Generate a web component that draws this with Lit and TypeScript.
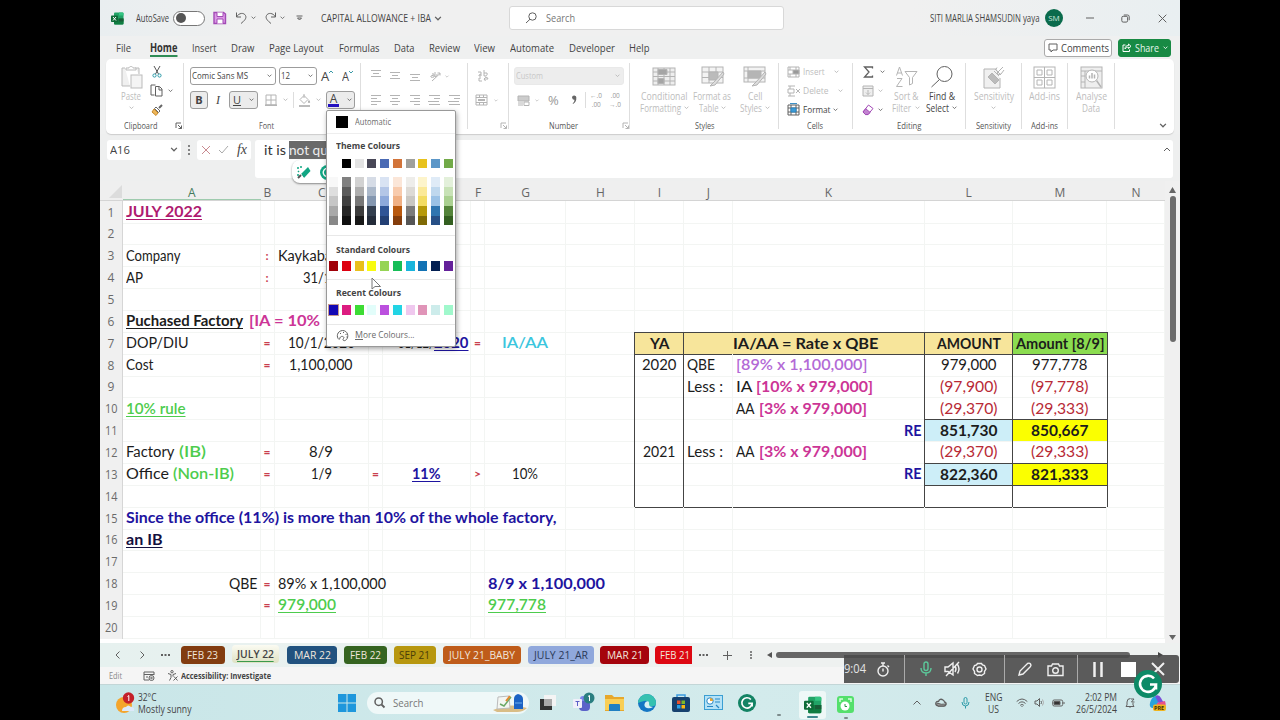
import { css, html, svg, LitElement } from "lit";
import { customElement, property } from "lit/decorators.js";

// Text that is stretched or condensed until it has the given width.
@customElement("fit-text")
export class FitText extends LitElement {
    static styles = css`
        :host {
            display: inline-block;
            flex: none;
            white-space: pre;
            transform-origin: 0 50%;
        }
    `;

    @property() text = "";
    @property({ type: Number }) w = 0;

    firstUpdated() {
        if (!this.w) return;
        const natural = this.getBoundingClientRect().width;
        this.style.transform = `scaleX(${(this.w / natural).toFixed(4)})`;
        this.style.marginRight = `${(this.w - natural).toFixed(2)}px`;
    }

    render() {
        return html`${this.text}`;
    }
}

const t = (text: string, w = 0, cls = "") =>
    html`<fit-text class=${cls} .text=${text} .w=${w}></fit-text>`;

// One line of items, each starting at its own offset from the left edge x0.
const track = (x0: number, items: [number, unknown][], cls = "") => {
    let last = x0;
    const cols = items.map(([x]) => {
        const size = x - last;
        last = x;
        return `${size}px`;
    });
    return html`<div class="track ${cls}" style="grid-template-columns:${cols.join(" ")} max-content">
        <i></i>${items.map(([, c]) => html`<div class="slot">${c}</div>`)}
    </div>`;
};

const ic = (w: number, h: number, body: unknown, cls = "") =>
    html`<svg class="ic ${cls}" width=${w} height=${h} viewBox="0 0 ${w} ${h}">${body}</svg>`;

const chev = (cls = "", w = 6) =>
    html`<svg class="ic ${cls}" width=${w} height=${w / 2 + 1} viewBox="0 0 6 4"><path d="M.7 .7L3 3 5.3 .7" /></svg>`;

const launcher = (cls = "") =>
    ic(7, 7, svg`<path d="M1 6V1h5M3 3l3.500 3.500M6.500 3.500v3h-3" />`, cls);

const icons = {
    excel: (s: number) => html`<svg class="ic flat" width=${s} height=${s} viewBox="0 0 26 26">
        <rect x="6" y="1" width="19" height="24" rx="2" fill="#21a366" />
        <path d="M6 13h19v10a2 2 0 0 1-2 2H8a2 2 0 0 1-2-2z" fill="#107c41" />
        <path d="M16 13h9v6h-9z" fill="#185c37" /><path d="M16 1h7a2 2 0 0 1 2 2v4h-9z" fill="#33c481" />
        <rect x="0" y="7" width="14" height="13" rx="1.5" fill="#0e6b38" />
        <path d="M4 10l6 7M10 10l-6 7" stroke="#fff" stroke-width="2" />
    </svg>`,
    save: ic(14, 14, svg`<path d="M1 1.500h9.500l2 1.500v9.500H1z" fill="#dc98e6" stroke-width="1.400" /><path d="M4 1.500v4h6v-4M4 12.500v-4.500h6v4.500" fill="#fff" />`, "purple"),
    undo: ic(13, 14, svg`<path d="M1.500 1.500v4.500h4.500M1.500 6C4 1.500 9 1.500 10.500 4.500 12 7.500 9 10 6 12.500" />`),
    redo: ic(13, 14, svg`<path d="M11.500 1.500v4.500h-4.500M11.500 6C9 1.500 4 1.500 2.500 4.500 1 7.500 4 10 7 12.500" />`),
    more: ic(7, 6, svg`<path d="M.5 1h6M1.500 3l2 2 2-2z" />`),
    lens: ic(12, 12, svg`<circle cx="7.500" cy="4.500" r="3.700" /><path d="M5 7.200L1 11" />`),
    min: ic(8, 2, svg`<path d="M0 1h8" />`),
    restore: ic(9, 9, svg`<rect x=".8" y="2.300" width="5.800" height="5.800" rx="1.400" /><path d="M2.800 1h3.700A1.700 1.700 0 0 1 8.200 2.700v3.500" />`),
    close: ic(9, 9, svg`<path d="M.7 .7l7.600 7.600M8.300 .7L.7 8.300" />`),
    comment: ic(10, 10, svg`<path d="M1 1h8v6H5L3 9V7H1z" />`),
    paste: ic(24, 25, svg`<path d="M5 3H2v18h8M15 3h4v6" fill="#f0f0f0" /><path d="M6 5V3h3c0-2 4-2 4 0h3v2z" fill="#fff" /><rect x="11" y="10" width="11" height="13" fill="#f4f4f4" />`, "dim2"),
    cut: ic(10, 13, svg`<path d="M2 1l4.500 8M8 1L3.500 9" stroke="#555" /><circle cx="2.500" cy="10.500" r="1.600" /><circle cx="7.500" cy="10.500" r="1.600" />`, "teal"),
    copy: ic(13, 13, svg`<path d="M4.500 11H1V1h4.500" /><path d="M5.500 2.500H9.500L12 5v7H5.500zM9 3v3h3" />`),
    brush: ic(12, 12, svg`<path d="M11 1L8 4" stroke="#666" stroke-width="2" /><path d="M5 3l4 4-1.500 1.500-4-4z" fill="#fff" stroke="#666" /><path d="M3 5l4 4-2 2.500L1 8z" fill="#eeb65a" stroke="#c68b2d" />`),
    borders: ic(12, 12, svg`<path d="M1 1h10v10H1zM6 1v10M1 6h10" /><path d="M0 11.200h12" stroke-width="1.600" />`, "dim"),
    fill: ic(13, 13, svg`<path d="M2 5.500L6 1.500l4 4-4 4zM6 0v4" /><path d="M11 6.500q1.500 2 0 2.500-1.500-.5 0-2.500" /><path d="M1 12h11" stroke-width="1.800" />`, "dim"),
    wrap: ic(12, 12, svg`<path d="M1 2h3v4H2q-1-1 2-2M7 0v6q4 0 3-3H7M4 8H2v3h3M8 7q3 0 3 2H7l1.500-1.500M7 9l1.500 2" />`, "dim"),
    merge: ic(13, 12, svg`<path d="M1 1h11v10H1zM1 3.500h11M1 8.500h11M4.500 1v2.500M8.500 1v2.500M4.500 8.500V11M8.500 8.500V11" /><path d="M3 6h7" stroke-width="2" />`, "dim"),
    money: ic(13, 11, svg`<path d="M1 1h11v5H1z" fill="#ccc" /><path d="M1 8h5M1 10h5M7 7h5v3.500H7z" />`, "dim"),
    cond: ic(24, 20, svg`<rect x="1" y="1" width="22" height="17" fill="#eee" /><path d="M1 5h22M1 9.500h22M1 14h22M6 1v17M12 1v17M18 1v17" /><path d="M6 2.500h9v5H6zM6 11.500h6v5H6z" fill="#a5a5a5" />`, "dim"),
    table: ic(24, 22, svg`<rect x="1" y="1" width="21" height="16" fill="#f3f3f3" /><path d="M1 6h21M1 11.500h21M8 1v16M15 1v16" /><path d="M8 6h9v8H8z" fill="#bbb" /><path d="M22 6l-9 10-4 4 5-1 9-11z" fill="#ddd" />`, "dim"),
    styles: ic(24, 22, svg`<rect x="1" y="1" width="21" height="15" fill="#f3f3f3" /><path d="M1 5h21M5 1v15M1 12h21" /><path d="M5 5h13v7H5z" fill="#b5b5b5" /><path d="M22 6l-9 10-4 4 5-1 9-11z" fill="#ddd" />`, "dim"),
    insert: ic(13, 12, svg`<path d="M1 1h11v10H1zM1 4h5M1 8h5M9 1v10M3 1v3M3 8v3" /><path d="M6 4h6v4H6z" fill="#999" />`, "dim"),
    del: ic(13, 12, svg`<path d="M1 1h7M1 11h7M1 4h6v4H1zM3 1v3M3 8v3M9 4l4 4M13 4L9 8" />`, "dim"),
    format: ic(13, 13, svg`<path d="M1 2h11v10H1zM1 5h11M1 9h11M4 2v10M9 2v10" /><path d="M4 5h5v4H4z" fill="#3d9bd6" stroke="#2b86c2" /><path d="M3 .6h7" stroke="#2b86c2" />`),
    sigma: ic(11, 12, svg`<path d="M9.500 2.500V1H1.500L6 6l-4.500 5h8V9.500" stroke-width="1.300" />`),
    filldown: ic(12, 12, svg`<path d="M1 1h10v10H1zM1 3.500h10M6 5v4.500M4 7.500l2 2 2-2" fill="#eee" />`, "dim"),
    eraser: ic(12, 12, svg`<path d="M6.500 1l4.500 3.500-5 6H3.500L1 8z" fill="#fff" /><path d="M3.700 4.700l4.400 3.700-2 2.200H3.500L1 8z" fill="#c283d0" />`, "purple"),
    funnel: ic(23, 22, svg`<path d="M1.500 9.500L4.500 1l3 8.500M2.500 7h4M2 12.500h5L1.500 20.500h6" /><path d="M10 5.500h12l-4.500 6v6l-3 1.500v-7.500z" />`, "dim"),
    find: ic(24, 24, svg`<circle cx="14.500" cy="9" r="7.500" /><path d="M9.500 14.500L1.500 22" />`),
    sens: ic(22, 23, svg`<path d="M17 12v10H1V3h12" fill="#f0f0f0" /><path d="M5 11l4-4 7 7-4 4z" fill="#bbb" /><path d="M11 5l5 5M12 3l6 6M14 1.500q-2 2 0 3M20 1l-6 6q2 3 4 1l3-4" />`, "dim"),
    addins: ic(23, 23, svg`<rect x="1" y="1" width="21" height="21" /><path d="M11.500 1v21M1 11.500h21" /><path d="M4 4h5v5H4zM14 4h5v5h-5zM4 14h5v5H4zM14 14h5v5h-5z" />`, "dim"),
    analyse: ic(23, 23, svg`<rect x="1" y="1" width="21" height="21" fill="#eee" /><path d="M1 5h21M5 5v17M1 10h4M1 16h4" /><circle cx="12" cy="10" r="6" fill="#fff" /><path d="M9.500 12.500V9.500M12 12.500V7M14.500 12.500V8.500M16.500 14.500L21 21" stroke-width="1.500" />`, "dim"),
    palette: ic(13, 13, svg`<path d="M3 10.500C0 8 1 2 6.500 1.500 12 1.500 13 8 10.500 10.500 8 13 6 11 7.500 9.500 9 8 6 6.500 4.500 8 3.500 9 4 10 3 10.500z" /><path d="M4 4.500h1M7 3.500h1M9.500 5.500h1M10 8h.6" />`),
    cursor: html`<svg class="cursor" width="12" height="15" viewBox="0 0 12 15"><path d="M1 1v11l3-2.500h5.500z" fill="#fff" stroke="#777" /></svg>`,
    wand: html`<svg class="ic flat" width="16" height="16" viewBox="0 0 16 16">
        <path d="M5 9l7-7 2.500 4-6.500 7z" fill="#11a683" /><path d="M4 8l4 6" stroke="#fff" />
        <path d="M1 3h2M5 1v2M2 6l1 1M1 10h2" stroke="#11a683" stroke-width="1.500" /><path d="M2 13l3-3" stroke="#555" stroke-width="2" />
    </svg>`,
    g: (s: number, c: string) => html`<svg class="ic flat" width=${s} height=${s} viewBox="0 0 28 28">
        <circle cx="14" cy="14" r="14" fill=${c} />
        <path d="M20 8.500A8 8 0 1 0 22 14.500h-6M22 14.500v5" fill="none" stroke="#fff" stroke-width="2.600" />
    </svg>`,
};

// Three or four lines of text in miniature, as [x, length] pairs.
const lines = (segs: [number, number][], top = 1) =>
    ic(12, 12, svg`<path d=${segs.map(([x, l], i) => `M${x} ${top + i * 3 + 0.5}h${l}`).join("")} />`, "dim");

const big = (w: number, icon: unknown, l1: unknown, l2: unknown = "", cls = "off") =>
    html`<div class="big ${cls}" style="width:${w}px">
        <div class="art">${icon}</div>
        <div class="cap">${l1}</div>
        <div class="cap">${l2}</div>
    </div>`;

const group = (x0: number, x1: number, body: unknown, label: unknown) =>
    html`<div class="group" style="width:${x1 - x0}px">
        <div class="gbody">${body}</div>
        <div class="glabel">${label}</div>
    </div>`;

type Run = [text: string, cls: string, width: number];
interface Cell {
    runs?: Run[];
    align?: string;
    cls?: string;
}

const COLS = ["A", "B", "C", "D", "E", "F", "G", "H", "I", "J", "K", "L", "M", "N"];

const c = (text: string, cls: string, w: number, align = "l", cell = ""): Cell => ({
    runs: [[text, cls, w]],
    align,
    cls: cell,
});
const eq = c("=", "eq", 0, "c");
const colon = c(":", "eq", 0, "c");
const num = (text: string, w: number, kind = "", cell = "") => c(text, kind, w, "c", cell);

const SHEET: Record<number, Record<string, Cell>> = {
    1: { A: c("JULY 2022", "b u plum", 76) },
    3: { A: c("Company", "", 54.5), B: colon, C: c("Kaykaba", "", 54) },
    4: { A: c("AP", "", 17), B: colon, C: c("31/12", "", 36, "c") },
    6: { A: { runs: [["Puchased Factory", "b u", 117], [" ", "", 6], ["[IA = 10%", "b pink", 71]] } },
    7: {
        A: c("DOP/DIU", "", 62.5), B: eq, C: c("10/1/2020", "", 67, "c"),
        E: { runs: [["31/12/", "", 36], ["2020", "b u navy", 34.5]], align: "r" },
        F: eq, G: c("IA/AA", "sb cyan", 46, "c"),
        I: num("YA", 19.5, "b", "sand top bot"), J: { cls: "sand top bot" },
        K: { runs: [["IA/AA = Rate x QBE", "b", 145.5]], cls: "sand top bot flush" },
        L: num("AMOUNT", 64, "b", "sand top bot"), M: num("Amount [8/9]", 88.5, "b", "lime top bot"),
    },
    8: {
        A: c("Cost", "", 27.5), B: eq, C: c("1,100,000", "", 63.5, "c"),
        I: num("2020", 34.5), J: c("QBE", "", 28), K: c("[89% x 1,100,000]", "sb violet", 131.5),
        L: num("979,000", 55.5), M: num("977,778", 55.5),
    },
    9: {
        J: c("Less :", "", 36), K: { runs: [["IA", "", 16.5], [" ", "", 4.5], ["[10% x 979,000]", "b pink", 117]] },
        L: num("(97,900)", 57.5, "red"), M: num("(97,778)", 57.5, "red"),
    },
    10: {
        A: c("10% rule", "sb u green", 59.5),
        K: { runs: [["AA", "", 18.5], [" ", "", 5], ["[3% x 979,000]", "b pink", 108]] },
        L: num("(29,370)", 57.5, "red"), M: num("(29,333)", 57.5, "red"),
    },
    11: {
        K: c("RE", "b navy", 17.5, "r"),
        L: num("851,730", 57.5, "b", "sky top"), M: num("850,667", 57.5, "b", "yellow top"),
    },
    12: {
        A: { runs: [["Factory", "", 48.5], [" ", "", 4.5], ["(IB)", "sb green", 27]] }, B: eq, C: c("8/9", "", 24, "c"),
        I: num("2021", 32.5), J: c("Less :", "", 36),
        K: { runs: [["AA", "", 18.5], [" ", "", 5], ["[3% x 979,000]", "b pink", 108]] },
        L: num("(29,370)", 57.5, "red"), M: num("(29,333)", 57.5, "red"),
    },
    13: {
        A: { runs: [["Office", "", 43], [" ", "", 4], ["(Non-IB)", "sb green", 61]] }, B: eq, C: c("1/9", "", 21, "c"),
        D: eq, E: c("11%", "b u navy", 28.5, "c"), F: c(">", "eq", 0, "c"), G: c("10%", "", 26, "c"),
        K: c("RE", "b navy", 17.5, "r"),
        L: num("822,360", 57.5, "b", "sky top bot"), M: num("821,333", 57.5, "b", "yellow top bot"),
    },
    14: { I: { cls: "bot" }, J: { cls: "bot" }, K: { cls: "bot" }, L: { cls: "bot" }, M: { cls: "bot" } },
    15: { A: c("Since the office (11%) is more than 10% of the whole factory,", "b navy", 430.5) },
    16: { A: c("an IB", "b u ink", 36.5) },
    18: {
        A: c("QBE", "", 28.5, "r"), B: eq, C: c("89% x 1,100,000", "", 108),
        G: c("8/9 x 1,100,000", "b navy", 117),
    },
    19: { B: eq, C: c("979,000", "sb u green", 58), G: c("977,778", "sb u green", 58) },
};

// Vertical rules of the capital allowance table in I7:M14.
const edge = (row: number, col: string) => {
    if (row < 7 || row > 14) return "";
    if (col === "I" || col === "J" || col === "L") return "edgeL";
    return col === "M" ? "edgeR" : "";
};

const THEME = ["#fff", "#000", "#e3e3e3", "#484757", "#4a6ab4", "#d2743a", "#a0a09c", "#e8c21c", "#5c97c8", "#72aa48"];
const SHADES = [
    ["#f8f8f8", "#dedede", "#c6c6c6", "#a9a9a9", "#888"],
    ["#808080", "#5b5b5b", "#404040", "#262626", "#101010"],
    ["#d2d2d2", "#aeaeae", "#777", "#3c3c3c", "#181818"],
    ["#d6dce6", "#acb9ca", "#8497b0", "#333f4f", "#242c3a"],
    ["#d9e3f3", "#b4c6e7", "#8ea9db", "#305496", "#233f74"],
    ["#fbe6d8", "#f8cbad", "#f0b084", "#b9590f", "#843d0c"],
    ["#eeedea", "#dddad5", "#c9c7c2", "#7b7b7b", "#555"],
    ["#fdf4cb", "#fbe998", "#f3dc63", "#b79a0a", "#7f6a06"],
    ["#dfebf7", "#bfd8ee", "#9bc2e6", "#2f75b0", "#264f86"],
    ["#e3f0da", "#c8e2b6", "#aad090", "#54843a", "#335f20"],
];
const STANDARD = ["#a00008", "#dd0010", "#e9bf1c", "#f8fb10", "#96d455", "#16bd57", "#18b4dc", "#1272b4", "#031f52", "#64219a"];
const RECENT = ["#1408b4", "#dc1c80", "#3ddc34", "#e2fdfa", "#bb50de", "#22d4e4", "#efc8ee", "#e094b8", "#cdeceb", "#a0f8cc"];

const SHEET_TABS: [number, number, number, string, string][] = [
    [181, 43.5, 31, "FEB 23", "t-brown"],
    [232, 47, 37, "JULY 22", "t-active"],
    [287, 50, 37, "MAR 22", "t-blue"],
    [344, 43, 31, "FEB 22", "t-green"],
    [394, 42, 31, "SEP 21", "t-gold"],
    [443, 78, 66, "JULY 21_BABY", "t-orange"],
    [528, 65.5, 54, "JULY 21_AR", "t-peri"],
    [600, 49, 36, "MAR 21", "t-dred"],
    [655, 36.5, 30, "FEB 21", "t-red"],
];

const MENU_TABS: [number, string, number][] = [
    [116, "File", 15], [150, "Home", 27.5], [192, "Insert", 24.5], [231, "Draw", 23.5],
    [269, "Page Layout", 54.5], [338.5, "Formulas", 40.5], [393.5, "Data", 20.5], [429, "Review", 31],
    [474, "View", 21], [510, "Automate", 44], [569, "Developer", 46], [628.5, "Help", 20.5],
];

@customElement("app-root")
export class AppRoot extends LitElement {
    static styles = css`
        :host {
            display: block;
            width: 1280px;
            height: 720px;
            overflow: hidden;
            background: #000;
            font-family: "Segoe UI", "Open Sans", sans-serif;
            font-size: 9.5px;
            line-height: 12px;
            color: #444;
        }
        .window {
            position: relative;
            box-sizing: border-box;
            width: 1080px;
            height: 720px;
            margin: 0 auto;
            background: #eff0f0;
            overflow: hidden;
        }
        .track {
            display: grid;
            align-items: center;
            height: 100%;
        }
        .slot {
            display: flex;
            align-items: center;
            white-space: nowrap;
            min-width: 0;
        }
        .ic {
            display: block;
            flex: none;
            fill: none;
            stroke: #606060;
            stroke-width: 1;
            overflow: visible;
        }
        .ic.flat { stroke: none; }
        .ic.dim { stroke: #b4b4b4; }
        .ic.dim2 { stroke: #bbb; }
        .ic.purple { stroke: #a24ab5; }
        .ic.teal { stroke: #2a9aa8; }
        .ic.light { stroke: #fff; }
        .off { color: #bdbdbd; }
        .b { font-weight: 700; }
        .sb { font-weight: 600; }

        /* title bar and menu */
        .title { height: 36px; background: linear-gradient(90deg, #e9eef0, #f0f0f0 15%, #f0f0f0 75%, #e9eff1); font-size: 10px; }
        .toggle {
            box-sizing: border-box;
            width: 32px;
            height: 15px;
            border: 1px solid #777;
            border-radius: 8px;
            background: #fff;
            padding: 1.500px 2px;
        }
        .knob { width: 10px; height: 10px; border-radius: 50%; background: #555; }
        .search {
            display: flex;
            align-items: center;
            gap: 9px;
            box-sizing: border-box;
            width: 275px;
            height: 24px;
            padding-left: 15px;
            border: 1px solid #d8d8d8;
            border-radius: 3px;
            background: #fff;
            font-size: 11px;
            color: #777;
        }
        .avatar {
            width: 18px;
            height: 18px;
            border-radius: 50%;
            background: #0b6b4c;
            color: #cfe9df;
            font-size: 8px;
            line-height: 18px;
            text-align: center;
        }
        .menu { height: 23px; font-size: 11.500px; line-height: 14px; }
        .home { font-weight: 700; color: #333; border-bottom: 2px solid #2f8c55; padding-top: 2px; }
        .btn {
            display: flex;
            align-items: center;
            gap: 3px;
            box-sizing: border-box;
            height: 18px;
            padding: 0 3px;
            border: 1px solid #aaa;
            border-radius: 3px;
            background: #fff;
            font-size: 11px;
        }
        .comments { width: 68px; }
        .share { width: 53px; gap: 4px; background: #188a44; border-color: #188a44; color: #e6f6ec; }

        /* ribbon */
        .ribbon {
            position: relative;
            display: flex;
            height: 74.500px;
            margin: 0 6px;
            background: #fff;
            border-radius: 5px;
            box-shadow: 0 1px 1px #ccc;
        }
        .group { position: relative; box-sizing: border-box; flex: none; }
        .group:not(:last-child) { background: linear-gradient(#dedede, #dedede) right 4px / 1px 66px no-repeat; }
        .gbody { height: 59.500px; }
        .gbody > .track { align-items: start; }
        .gbody > .track > .slot { align-items: flex-start; }
        .glabel { height: 14px; font-size: 9px; color: #555; }
        .s2 { display: grid; grid-template-rows: 24px 24px; padding-top: 5px; }
        .s3 { display: grid; grid-template-rows: 19px 19px 19px; padding-top: 3px; }
        .big { display: flex; flex-direction: column; align-items: center; padding-top: 5px; }
        .art { height: 26px; display: flex; align-items: center; }
        .cap { display: flex; align-items: center; gap: 3px; height: 12px; font-size: 10px; }
        .combo, .key {
            display: flex;
            align-items: center;
            justify-content: space-between;
            box-sizing: border-box;
            height: 18px;
            padding: 0 3px 0 1px;
            border: 1px solid #9c9c9c;
            border-radius: 3px;
            background: #fff;
        }
        .key { background: #ececec; justify-content: center; gap: 8px; padding: 0; font-size: 11px; color: #444; }
        .w86 { width: 86px; }
        .w38 { width: 38px; }
        .w18 { width: 18px; }
        .w29 { width: 29px; }
        .w110 { width: 110px; background: #ededed; border-color: #e9e9e9; color: #c8c8c8; }
        .ital { font: italic 12px "Liberation Serif", serif; }
        .und { text-decoration: underline; }
        .aa { font-size: 13px; display: flex; }
        .vr { width: 1px; height: 16px; background: #ddd; }
        .fcol { border-bottom: 3px solid #2412c0; line-height: 11px; padding: 0 2px; font-size: 12px; }
        .pct { font-size: 13px; color: #999; }
        .decs { display: grid; grid-template-rows: 9px 9px; font-size: 6.500px; line-height: 9px; color: #999; }

        /* formula bar */
        .formula { height: 47.500px; background: #eeefef; }
        .formula > .track { align-items: start; }
        .fbox {
            display: flex;
            align-items: center;
            box-sizing: border-box;
            height: 20px;
            margin-top: 6px;
            background: #fff;
            border-radius: 3px;
            font-size: 11.500px;
        }
        .fbox.clear { background: none; }
        .name { width: 74px; padding: 0 3px; justify-content: space-between; }
        .fxs { width: 54px; padding: 0 4px; justify-content: space-between; }
        .fx { font: italic 14px "Liberation Serif", serif; }
        .entry {
            width: 918px;
            height: 38.500px;
            align-items: flex-start;
            padding: 1px 2px 0 9px;
            font-family: "Comic Sans MS", Lato, sans-serif;
            font-size: 13.500px;
            line-height: 18px;
            gap: 3px;
            color: #333;
        }
        .sel { background: #6a6a6a; color: #eee; }
        .grow { flex: 1; }
        .up { padding-top: 6px; }

        /* grid */
        .sheet { display: flex; height: 462px; background: #fff; isolation: isolate; }
        .cells { width: 1065px; }
        .heads, .row { display: grid; grid-template-columns: 23px 137.500px 14px 94.500px 14px 88px 14px 81px 69px 49px 48.500px 192px 88.500px 94px 58px; }
        .heads {
            height: 19.500px;
            box-sizing: border-box;
            background: #efefef;
            border-bottom: 1px solid #d4d4d4;
            font-size: 12px;
            line-height: 24px;
            color: #666;
            text-align: center;
        }
        .head { height: 18.500px; box-sizing: border-box; }
        .headA { color: #457a5c; border-bottom: 1px solid #9fcbae; }
        .corner { width: 0; height: 0; border-left: 13px solid transparent; border-bottom: 13px solid #dcdcdc; margin: 4px 0 0 9px; }
        .row { height: 21.870px; }
        .rn {
            background: #f0f0f0;
            border-right: 1px solid #d6d6d6;
            font-size: 12px;
            line-height: 23px;
            color: #6a6a6a;
            text-align: center;
        }
        .cell {
            display: flex;
            align-items: center;
            box-sizing: border-box;
            min-width: 0;
            white-space: pre;
            padding: 0 2px 0 3px;
            border-right: 1px solid #f3f5f3;
            border-bottom: 1px solid #f3f5f3;
            font-family: "Comic Sans MS", Lato, sans-serif;
            font-size: 14.600px;
            line-height: 17px;
            color: #1c1c1c;
        }
        .cell fit-text { position: relative; z-index: 1; }
        .cell.c { justify-content: center; padding: 0; }
        .cell.r { justify-content: flex-end; }
        .cell.edgeL { box-shadow: -1px 0 #444; }
        .cell.edgeR { box-shadow: -1px 0 #444, 1px 0 #444; border-right: none; }
        .cell.top { border-top: 1px solid #444; }
        .cell.bot { border-bottom: 1px solid #444; }
        .cell.flush { padding-left: 0; }
        .cell.sand { background: #f7e59b; border-right: none; }
        .lime { background: #8bdc50; }
        .sky { background: #cdeef8; }
        .yellow { background: #fbff00; }
        .u { text-decoration: underline; text-decoration-thickness: 1px; text-underline-offset: 2px; }
        .plum { color: #ae1a70; }
        .pink { color: #cc3596; }
        .violet { color: #b36ad6; }
        .navy { color: #1e14a0; }
        .ink { color: #14103f; }
        .cyan { color: #3bc6de; }
        .green { color: #4dcc4d; }
        .red { color: #b82a36; }
        .eq { color: #c9404e; font-weight: 700; font-size: 12px; }
        .scroll { width: 15px; background: #f0f0f0; display: flex; flex-direction: column; align-items: center; padding-top: 6px; box-sizing: border-box; }
        .thumb { width: 6px; height: 146px; border-radius: 3px; background: #6c6c6c; margin-top: 3px; }
        .scroll .down { margin-top: auto; margin-bottom: 3px; }

        /* sheet tabs and status */
        .tabs { height: 24px; background: linear-gradient(90deg, #e6f1ef, #eef1f0 50%); }
        .tab { box-sizing: border-box; height: 18px; border-radius: 3.500px; text-align: center; font-size: 11px; line-height: 18px; color: #f0e6dd; overflow: hidden; }
        .t-brown { background: #823c10; }
        .t-active { background: linear-gradient(#fbfbf2, #dfe2c4); color: #444; font-weight: 600; margin-bottom: 3px; line-height: 17px; }
        .t-active fit-text { border-bottom: 1.500px solid #3c9a4c; line-height: 14px; }
        .t-blue { background: #21527f; }
        .t-green { background: #356420; }
        .t-gold { background: #b7970f; color: #4a3d08; }
        .t-orange { background: #bf5c1a; }
        .t-peri { background: #90a8dc; color: #2a3857; }
        .t-dred { background: #a5040c; }
        .t-red { background: #dd0812; border-radius: 3.500px 0 0 3.500px; padding-left: 5px; text-align: left; }
        .hthumb { width: 354px; height: 5.500px; border-radius: 3px; background: #666; }
        .status { height: 18px; background: #f5f5f5; font-size: 9.500px; border-bottom: 1px solid #c3d6d7; box-sizing: border-box; }
        .soft { color: #888; }

        /* task bar */
        .task { height: 35px; background: linear-gradient(90deg, #c9e6e8, #d3ebec 60%, #cfe8ea); }
        .two { line-height: 12px; font-size: 10.500px; }
        .two div { display: flex; }
        .two.right div { justify-content: flex-end; }
        .two.mid div { justify-content: center; }
        .pill {
            display: flex;
            align-items: center;
            gap: 8px;
            box-sizing: border-box;
            width: 162px;
            height: 22px;
            padding: 0 2px 0 7px;
            border-radius: 11px;
            background: #eff8f8;
            font-size: 11px;
            color: #777;
        }
        .open {
            display: grid;
            place-items: center;
            width: 27px;
            height: 28px;
            border-radius: 3px;
            background: #eef8f7;
        }
        .stack { display: flex; flex-direction: column; align-items: center; padding-top: 9px; gap: 4px; }
        .stack.tall { padding-top: 3px; gap: 0; }
        .tick { width: 4px; height: 2px; border-radius: 1px; background: #7c8b8c; }
        .tick.wide { width: 11px; background: #3f898e; margin-top: -3px; }
        .tick.lone { margin-top: 25px; }

        /* floating layers */
        .grammar {
            position: absolute;
            left: 192px;
            top: 160px;
            display: flex;
            gap: 8px;
            width: 60px;
            height: 18px;
            padding: 5px 0 0 4px;
            background: #fff;
            border-radius: 8px;
            box-shadow: 0 1px 2px #888;
        }
        .colors {
            position: absolute;
            left: 226px;
            top: 110px;
            box-sizing: border-box;
            width: 130px;
            height: 237px;
            border: 1px solid #999;
            border-radius: 2px;
            background: #fff;
            box-shadow: 1px 2px 5px rgba(0, 0, 0, 0.350);
            display: grid;
            grid-template-rows: 23px 24.500px 13px 5.500px 58px 26px 18px 26px 18.500px 1fr;
        }
        .item { display: flex; align-items: center; color: #6a6a6a; font-size: 9.500px; }
        .auto { gap: 7px; padding-left: 9px; border-bottom: 1px solid #eee; }
        .black { width: 12px; height: 12px; background: #000; }
        .hd { display: flex; align-items: center; padding-left: 9px; font-weight: 700; font-size: 9.500px; color: #444; }
        .hd.std { padding-top: 3px; }
        .swatches { display: grid; grid-template-columns: repeat(10, 9px); column-gap: 3.750px; padding-left: 2px; align-items: start; }
        .sw { height: 9.500px; }
        .sw.on { outline: 1px solid #c79a8d; }
        .shade { height: 9.700px; }
        .line { border-top: 1px solid #e8e8e8; }
        .moreCol { gap: 6px; padding-left: 9px; border-top: 1px solid #e8e8e8; }
        .cursor { position: absolute; left: 271px; top: 277px; }
        .rec {
            position: absolute;
            left: 744px;
            top: 655px;
            width: 335px;
            height: 28px;
            background: rgba(74, 74, 74, 0.900);
            border-radius: 0 3px 3px 0;
            color: #e4e4e4;
            font-size: 12px;
        }
        .rec .ic { stroke: #f0f0f0; stroke-width: 1.400; }
        .rec .mint { stroke: #5cc99b; }
        .rec .flat { stroke: none; }
        .rec .vr { height: 28px; background: #aaa; }
        .badge { position: absolute; left: 1033.500px; top: 670px; }
    `;

    renderTitle() {
        return html`<div class="title">
            ${track(100, [
                [111, icons.excel(13)],
                [136, t("AutoSave", 33)],
                [173, html`<div class="toggle"><div class="knob"></div></div>`],
                [212.5, icons.save],
                [235, icons.undo],
                [251, chev("", 5)],
                [264, icons.redo],
                [280, chev("", 5)],
                [296, icons.more],
                [321, t("CAPITAL ALLOWANCE + IBA", 110)],
                [434, chev("", 8)],
                [508.5, html`<div class="search">${icons.lens}${t("Search", 29)}</div>`],
                [929.5, t("SITI MARLIA SHAMSUDIN yaya", 109.5)],
                [1045, html`<div class="avatar">SM</div>`],
                [1086, icons.min],
                [1121, icons.restore],
                [1157.5, icons.close],
            ])}
        </div>`;
    }

    renderMenu() {
        const share = ic(9, 9, svg`<path d="M3.500 2H1v6.500h6.500V6.500M3 6c0-2.500 1.500-3.500 3.500-3.500V1L9 3.300 6.500 5.500V4.200C5 4.200 4 4.500 3 6z" />`, "light");
        return html`<div class="menu">
            ${track(100, [
                ...MENU_TABS.map(([x, name, w]): [number, unknown] => [x, t(name, w, name === "Home" ? "home" : "")]),
                [1044, html`<div class="btn comments">${icons.comment}${t("Comments", 48)}</div>`],
                [1118, html`<div class="btn share">${share}${t("Share", 24)}${chev("light", 5)}</div>`],
            ])}
        </div>`;
    }

    renderRibbon() {
        return html`<div class="ribbon">
            ${group(106, 183.5,
                track(106, [
                    [119, big(25, icons.paste, t("Paste", 20), chev("dim", 5))],
                    [150, html`<div class="s3">
                        ${track(150, [[152, icons.cut]])}
                        ${track(150, [[150, icons.copy], [168, chev("", 5)]])}
                        ${track(150, [[151, icons.brush]])}
                    </div>`],
                ]),
                track(106, [[123.5, t("Clipboard", 33.5)], [175, launcher()]]))}
            ${group(183.5, 361,
                html`<div class="s2">
                    ${track(183.5, [
                        [190, html`<div class="combo w86">${t("Comic Sans MS", 56)}${chev("", 5)}</div>`],
                        [278.5, html`<div class="combo w38">${t("12", 9)}${chev("", 5)}</div>`],
                        [321, html`<span class="aa">A${ic(4, 8, svg`<path d="M0 3l2-2 2 2" stroke="#3a9aa8" />`)}</span>`],
                        [342, html`<span class="aa">${t("A", 7)}${ic(4, 8, svg`<path d="M0 1l2 2 2-2" stroke="#3a9aa8" />`)}</span>`],
                    ])}
                    ${track(183.5, [
                        [190, html`<div class="key w18"><b>B</b></div>`],
                        [216, html`<span class="ital">I</span>`],
                        [229, html`<div class="key w29"><span class="und">U</span>${chev("", 5)}</div>`],
                        [265, icons.borders],
                        [283, chev("dim", 5)],
                        [293, html`<div class="vr"></div>`],
                        [298, icons.fill],
                        [316, chev("dim", 5)],
                        [325.5, html`<div class="key w29"><span class="fcol">A</span>${chev("", 5)}</div>`],
                    ])}
                </div>`,
                track(183.5, [[259, t("Font", 15)]]))}
            ${group(361, 468,
                html`<div class="s2">
                    ${track(361, [
                        [370, lines([[1, 10], [3, 6], [1, 10]], 0)],
                        [389, lines([[1, 10], [3, 6], [1, 10]], 2)],
                        [409, lines([[1, 10], [3, 6], [1, 10]], 4)],
                        [429, ic(12, 12, svg`<path d="M3 4q3-1 2 3-4 1-3-1l3-1M6 2v5q3-1 2-3M3 11L11 3.500M8.500 3H11v2.500" />`, "dim")],
                        [445, chev("dim", 4)],
                    ])}
                    ${track(361, [
                        [370, lines([[1, 10], [1, 6], [1, 10], [1, 6]])],
                        [389, lines([[1, 10], [3, 6], [1, 10], [3, 6]])],
                        [409, lines([[1, 10], [5, 6], [1, 10], [5, 6]])],
                        [428, lines([[1, 11], [6, 6], [0, 11], [1, 11]])],
                        [447.5, lines([[1, 11], [6, 6], [0, 11], [1, 11]])],
                    ])}
                </div>`,
                "")}
            ${group(468, 508.5,
                html`<div class="s2">
                    ${track(468, [[477, icons.wrap]])}
                    ${track(468, [[475, icons.merge], [494, chev("dim", 4)]])}
                </div>`,
                track(468, [[499.5, launcher("dim")]]))}
            ${group(508.5, 630,
                html`<div class="s2">
                    ${track(508.5, [[514, html`<div class="combo w110">${t("Custom", 27)}${chev("dim", 5)}</div>`]])}
                    ${track(508.5, [
                        [517, icons.money],
                        [535, chev("dim", 4)],
                        [548, html`<span class="pct">%</span>`],
                        [571, ic(6, 10, svg`<path d="M1 2.500a2.200 2.200 0 1 1 2 2.300q-1.500 0-2-2.300zM5.300 2.500q.5 4-3.300 6.500l-.3-.7Q3.500 7 3.700 4z" fill="#666" />`, "flat")],
                        [584.5, html`<div class="vr"></div>`],
                        [590, html`<div class="decs"><div>←.0</div><div>&nbsp;.00</div></div>`],
                        [609, html`<div class="decs"><div>&nbsp;.00</div><div>→.0</div></div>`],
                    ])}
                </div>`,
                track(508.5, [[548.5, t("Number", 29)], [621.5, launcher("dim")]]))}
            ${group(630, 778.5,
                track(630, [
                    [638, big(52, icons.cond, t("Conditional", 46.5), html`${t("Formatting", 41)}${chev("dim", 5)}`)],
                    [690, big(50, icons.table, t("Format as", 38), html`${t("Table", 19.5)}${chev("dim", 5)}`)],
                    [735, big(40, icons.styles, t("Cell", 14.500), html`${t("Styles", 22)}${chev("dim", 5)}`)],
                ]),
                track(630, [[694.5, t("Styles", 19.5)]]))}
            ${group(778.5, 852.5,
                html`<div class="s3">
                    ${track(778.5, [[787, icons.insert], [802.5, t("Insert", 21.5, "off")], [834, chev("dim", 5)]])}
                    ${track(778.5, [[787, icons.del], [802.5, t("Delete", 25.5, "off")], [838, chev("dim", 5)]])}
                    ${track(778.5, [[787, icons.format], [802.5, t("Format", 27.5)], [833, chev("", 5)]])}
                </div>`,
                track(778.5, [[807, t("Cells", 16)]]))}
            ${group(852.5, 965.5,
                track(852.5, [
                    [862, html`<div class="s3">
                        ${track(862, [[863, icons.sigma], [880, chev("", 5)]])}
                        ${track(862, [[862, icons.filldown], [878, chev("dim", 5)]])}
                        ${track(862, [[862, icons.eraser], [878, chev("", 5)]])}
                    </div>`],
                    [889, big(34, icons.funnel, t("Sort &", 24.5), html`${t("Filter", 19)}${chev("dim", 5)}`)],
                    [923, big(37, icons.find, t("Find &", 26), html`${t("Select", 23)}${chev("", 5)}`, "")],
                ]),
                track(852.5, [[897, t("Editing", 24.5)]]))}
            ${group(965.5, 1021.5,
                track(965.5, [[968.5, big(50, icons.sens, t("Sensitivity", 40), chev("dim", 5))]]),
                track(965.5, [[976, t("Sensitivity", 35)]]))}
            ${group(1021.5, 1067.5,
                track(1021.5, [[1024.5, big(40, icons.addins, t("Add-ins", 31))]]),
                track(1021.5, [[1031, t("Add-ins", 27)]]))}
            ${group(1067.5, 1114.5,
                track(1067.5, [[1071, big(40, icons.analyse, t("Analyse", 31), t("Data", 18))]]), "")}
            ${group(1114.5, 1174, "", track(1114.5, [[1159, chev("", 8)]]))}
        </div>`;
    }

    renderFormula() {
        return html`<div class="formula">
            ${track(100, [
                [107, html`<div class="fbox name">${t("A16", 20)}${chev("", 8)}</div>`],
                [188, html`<div class="fbox clear">${ic(2, 10, svg`<path d="M1 0v2M1 4v2M1 8v2" stroke-width="1.500" />`)}</div>`],
                [197, html`<div class="fbox fxs">
                    ${ic(10, 10, svg`<path d="M1 1l8 8M9 1L1 9" stroke="#c98a90" />`)}
                    ${ic(11, 9, svg`<path d="M1 5l3 3 6-7" stroke="#aaa" />`)}
                    <span class="fx">fx</span>
                </div>`],
                [255, html`<div class="fbox entry">
                    ${t("it is", 22)}<span class="sel">${t("not quali", 52)}</span>
                    <div class="grow"></div>
                    <div class="up">${ic(8, 5, svg`<path d="M1 4l3-3 3 3" />`)}</div>
                </div>`],
            ])}
        </div>`;
    }

    renderCell(row: number, col: string) {
        const cell = SHEET[row]?.[col] ?? {};
        return html`<div class="cell ${cell.align ?? ""} ${cell.cls ?? ""} ${edge(row, col)}">${(cell.runs ?? []).map(([text, cls, w]) => t(text, w, cls))}</div>`;
    }

    renderSheet() {
        const rows = Array.from({ length: 20 }, (_, i) => i + 1);
        return html`<div class="sheet">
            <div class="cells">
                <div class="heads">
                    <div class="corner"></div>
                    ${COLS.map((name) => html`<div class="head ${name === "A" ? "headA" : ""}">${name}</div>`)}
                </div>
                ${rows.map((r) => html`<div class="row">
                    <div class="rn">${t(String(r), r > 9 ? 12.5 : 0)}</div>
                    ${COLS.map((name) => this.renderCell(r, name))}
                </div>`)}
            </div>
            <div class="scroll">
                ${ic(7, 6, svg`<path d="M3.500 0L7 6H0z" fill="#666" />`, "flat")}
                <div class="thumb"></div>
                ${ic(7, 5, svg`<path d="M0 0h7L3.500 5z" fill="#666" />`, "flat down")}
            </div>
        </div>`;
    }

    renderTabs() {
        const dots = ic(9, 2, svg`<path d="M0 1h2M3.500 1h2M7 1h2" stroke-width="2" />`);
        return html`<div class="tabs">
            ${track(100, [
                [115, ic(5, 8, svg`<path d="M4.500 .5L1 4l3.500 3.500" />`)],
                [140, ic(5, 8, svg`<path d="M.5 .5L4 4 .5 7.500" />`)],
                [161, dots],
                ...SHEET_TABS.map(([x, w, tw, name, cls]): [number, unknown] => [
                    x,
                    html`<div class="tab ${cls}" style="width:${w}px">${t(name, tw)}</div>`,
                ]),
                [699, dots],
                [722.5, ic(9, 9, svg`<path d="M4.500 0v9M0 4.500h9" />`)],
                [750, ic(2, 8, svg`<path d="M1 0v2M1 3v2M1 6v2" stroke-width="1.500" />`)],
                [767, ic(5, 6, svg`<path d="M5 0v6L0 3z" fill="#555" />`, "flat")],
                [776, html`<div class="hthumb"></div>`],
                [1158, ic(5, 6, svg`<path d="M0 0v6l5-3z" fill="#444" />`, "flat")],
            ])}
        </div>`;
    }

    renderStatus() {
        return html`<div class="status">
            ${track(100, [
                [109, t("Edit", 13, "soft")],
                [143, ic(12, 10, svg`<path d="M1 1h10v3M1 1v8h5M1 3.500h10M3 6h2" /><circle cx="8.500" cy="7" r="2.500" /><circle cx="8.500" cy="7" r=".8" />`)],
                [167, ic(11, 11, svg`<circle cx="5" cy="1.700" r="1.200" /><path d="M1 3.500l3 1v3l-1.500 3M9 3.500l-3 1v2M7 6.500l3.500 4M10.500 6.500l-4 4" />`)],
                [180.5, t("Accessibility: Investigate", 90, "b")],
            ])}
        </div>`;
    }

    renderTaskbar() {
        return html`<div class="task">
            ${track(100, [
                [115, html`<svg class="ic flat" width="20" height="22" viewBox="0 0 20 22">
                    <circle cx="9" cy="13" r="8" fill="#f4a52c" /><path d="M7 19q0-4 4-4 2-3 5 0 4 0 3 4z" fill="#dde9fa" />
                    <circle cx="13.500" cy="6" r="5.700" fill="#c4202a" /><path d="M12.500 4.500l1.300-1v5.500" fill="none" stroke="#fff" />
                </svg>`],
                [137.5, html`<div class="two"><div>${t("32°C", 18.5)}</div><div>${t("Mostly sunny", 53.5)}</div></div>`],
                [338, html`<svg class="ic flat" width="18" height="18" viewBox="0 0 18 18"><path d="M0 0h8.500v8.500H0zM9.500 0H18v8.500H9.500zM0 9.500h8.500V18H0zM9.500 9.500H18V18H9.500z" fill="#1e97dc" /></svg>`],
                [367, html`<div class="pill">
                    ${ic(11, 11, svg`<circle cx="4.700" cy="4.700" r="3.700" stroke-width="1.500" /><path d="M7.500 7.500L10.500 10.500" stroke-width="1.800" />`)}
                    ${t("Search", 30.5)}<div class="grow"></div>
                    <svg class="ic flat" width="34" height="19" viewBox="0 0 34 19">
                        <path d="M0 17q17-8 34-2-4 4-10 4H4z" fill="#d9bd86" /><path d="M5 4l11-1 1 12-13 1z" fill="#f4f6f2" stroke="#bbb" />
                        <path d="M7 11l4 2 7-9" fill="none" stroke="#6aa867" stroke-width="1.500" /><path d="M13 8l4-5" stroke="#e2892e" stroke-width="2" />
                        <path d="M21 6q0-4 4-5 5 1 5 5v10h-9z" fill="#1c63c4" /><path d="M22 10h7" stroke="#6eb0ef" />
                    </svg>
                </div>`],
                [539, html`<svg class="ic flat" width="18" height="17" viewBox="0 0 18 17"><rect x="5" y="1" width="12" height="11" fill="#f4f4f4" /><rect x="1" y="5" width="12" height="11" fill="#333" /><path d="M5 5h8v7H5z" fill="#aaa" /></svg>`],
                [572, html`<svg class="ic flat" width="23" height="22" viewBox="0 0 23 22">
                    <circle cx="11" cy="7" r="3" fill="#7b83eb" /><rect x="7" y="9" width="11" height="10" rx="4" fill="#5b62c9" />
                    <rect x="1" y="7" width="9" height="9" rx="1" fill="#f0effa" /><path d="M3.500 9.500h4M5.500 9.500v4.500" stroke="#5b5fc7" />
                    <circle cx="17" cy="6" r="5.500" fill="#2a7e80" /><path d="M16 4.500l1.500-1V9" fill="none" stroke="#fff" />
                </svg>`],
                [605, html`<svg class="ic flat" width="19" height="17" viewBox="0 0 19 17"><path d="M0 1h7l2 2h10v14H0z" fill="#e7a82c" /><path d="M0 5h19v11H0z" fill="#f9cf55" /><path d="M4 11q0-1 1-1h9q1 0 1 1v6H4z" fill="#1f7fc2" /></svg>`],
                [638, html`<svg class="ic flat" width="18" height="18" viewBox="0 0 18 18"><circle cx="9" cy="9" r="9" fill="#1476c4" /><path d="M0 9a9 9 0 0 1 18 0q0 3-4 3.500-4 0-3-3Q10 6 6 7 2 8 0 9z" fill="#35c1b0" /><path d="M6.500 10q1-3.500 4-2.500 1 1 .5 2.500 0 3 4 3-3 2-6 1-3-1-2.500-4z" fill="#d7f0f3" /></svg>`],
                [671.5, html`<svg class="ic flat" width="18" height="18" viewBox="0 0 18 18"><path d="M5 4V1h8v3" fill="none" stroke="#3b9be0" stroke-width="1.500" /><rect x="0" y="3" width="18" height="15" rx="2" fill="#16416f" /><path d="M5 6.500h3.500V10H5z" fill="#e8502a" /><path d="M9.500 6.500H13V10H9.500z" fill="#7cb928" /><path d="M5 11h3.500v3.500H5z" fill="#28a0e8" /><path d="M9.500 11H13v3.500H9.500z" fill="#fbb810" /></svg>`],
                [704, html`<svg class="ic flat" width="19" height="15" viewBox="0 0 19 15"><rect x=".5" y=".5" width="18" height="14" fill="#b5e2f6" stroke="#3b9fd3" /><circle cx="6" cy="6" r="3.200" fill="#fff" stroke="#2887c4" /><path d="M11 4h5M11 7h5M3 11.500h6M12 10l3 3" stroke="#2887c4" stroke-width="1.200" /><path d="M6 6V3a3 3 0 0 1 3 3z" fill="#e6a531" /></svg>`],
                [737.5, icons.g(18, "#138364")],
                [777, html`<div class="tick lone"></div>`],
                [799, html`<div class="stack tall"><div class="open">${icons.excel(18)}</div><div class="tick wide"></div></div>`],
                [837, html`<div class="stack"><svg class="ic flat" width="17" height="17" viewBox="0 0 17 17"><rect width="17" height="17" rx="3" fill="#54e06c" /><circle cx="8" cy="10" r="4.500" fill="#fff" /><path d="M8 8v2.500h2" fill="none" stroke="#2a9a44" /><path d="M3 6V3h3M11 3h3v3" fill="none" stroke="#d5ffdc" stroke-width="1.500" /></svg><div class="tick"></div></div>`],
                [913, ic(8, 5, svg`<path d="M.5 4.500L4 1l3.500 3.500" />`)],
                [935, ic(12, 9, svg`<path d="M3 8Q0 7 1 4.500 2 3 3.500 3.500 5 0 8 2q1.500 1 1.500 2 2 .5 1.500 2.500-.5 1.500-2 1.500z" stroke-width="1.300" /><path d="M3 8q-2-1-1-3 4 2 9 1-1 2-2 2z" fill="#999" />`)],
                [960.5, ic(9, 12, svg`<rect x="3" y=".5" width="3" height="6.500" rx="1.500" /><path d="M1 5q0 4 3.500 4T8 5M4.500 9v2.500" />`, "teal")],
                [985, html`<div class="two mid"><div>${t("ENG", 17.5)}</div><div>${t("US", 11)}</div></div>`],
                [1016, ic(12, 10, svg`<path d="M.7 3.500q5.300-5 10.600 0M2.500 5.500q3.500-3.300 7 0M4.200 7.300q1.800-1.700 3.600 0M6 8v1" />`)],
                [1034, ic(10, 9, svg`<path d="M1 3h2l2.500-2.500v8L3 6H1zM7 3q1 1.500 0 3" /><path d="M8.500 1.500q2 3 0 6" stroke="#aaa" />`)],
                [1052, ic(13, 8, svg`<rect x=".7" y="1" width="10" height="6" rx="1.500" /><path d="M2 2.500h6v3H2z" fill="#333" /><path d="M12 3v2" />`)],
                [1076, html`<div class="two right"><div>${t("2:02 PM", 32)}</div><div>${t("26/5/2024", 41)}</div></div>`],
                [1124.5, ic(10, 12, svg`<path d="M5.500 1.500Q2 1.500 2 5v3L1 9.500h8L8 8V6M4 9.500q1 2 2 0M6 2h3L6.500 5h3" />`)],
                [1149, html`<svg class="ic flat" width="17" height="18" viewBox="0 0 17 18"><path d="M1 9q1-5 5-7l4 4-3 8H3q-3-1-2-5z" fill="#29a3dd" /><path d="M6 2q4-2 6 2 1 3 4 5l-5 3z" fill="#7a4fd8" /><path d="M8 9l8-2q2 6-2 8H7z" fill="#e8508a" /><rect x="4" y="10.500" width="13" height="6.500" rx="2" fill="#f0b51e" /><text x="5" y="16" font-size="5.500" font-weight="700" fill="#403004">PRE</text></svg>`],
            ])}
        </div>`;
    }

    renderColors() {
        const swatches = (list: string[], sel = -1) => html`<div class="swatches">
            ${list.map((color, i) => html`<div class="sw ${i === sel ? "on" : ""}" style="background:${color}"></div>`)}
        </div>`;
        return html`<div class="colors">
            <div class="item auto"><div class="black"></div>${t("Automatic", 36)}</div>
            <div class="hd">${t("Theme Colours", 64)}</div>
            ${swatches(THEME)}
            <div></div>
            <div class="swatches">
                ${SHADES.map((col) => html`<div>${col.map((color) => html`<div class="shade" style="background:${color}"></div>`)}</div>`)}
            </div>
            <div class="hd line std">${t("Standard Colours", 74)}</div>
            ${swatches(STANDARD)}
            <div class="hd line">${t("Recent Colours", 65)}</div>
            ${swatches(RECENT, 0)}
            <div class="item moreCol">${icons.palette}<span>${t("M", 8, "und")}${t("ore Colours...", 51.5)}</span></div>
        </div>`;
    }

    renderRecorder() {
        return html`<div class="rec">
            ${track(844, [
                [844, t("9:04", 22)],
                [876, ic(14, 15, svg`<circle cx="7" cy="9" r="5" /><path d="M5 1h4M7 1v3M7 6.500V9.500M11.500 3.500l1.500 1.500" />`)],
                [904, html`<div class="vr"></div>`],
                [920, ic(12, 16, svg`<rect x="4" y="1" width="4" height="8.500" rx="2" /><path d="M1 7q0 5 5 5t5-5M6 12v3" />`, "mint")],
                [944, ic(17, 14, svg`<path d="M1 5h3l5-4v12L4 9.500H1zM11 4q2 3 0 6M13.500 2.500q3 4.500 0 9M15 0L2 14" />`)],
                [972, ic(15, 15, svg`<path d="M5.500 1.500h4l1 1.500 2 .5 1.500 3.500-1.500 2.500v2l-3 2-2-.5-2 .5-3-2v-2L1 7l1.500-3.500 2-.5z" /><circle cx="7.500" cy="7.500" r="2.500" />`)],
                [1004, html`<div class="vr"></div>`],
                [1018, ic(14, 14, svg`<path d="M1 13l1-4L9.500 1.500q2-1 3 .5t0 2.500L5 12z" />`)],
                [1047, ic(17, 13, svg`<path d="M1 3h3.500l1-2h6l1 2H16v9.500H1z" /><circle cx="8.500" cy="7.500" r="2.800" />`)],
                [1076.5, html`<div class="vr"></div>`],
                [1092, ic(12, 15, svg`<path d="M2.500 0v15M9.500 0v15" stroke-width="2.500" />`)],
                [1121, ic(15, 15, svg`<rect width="15" height="15" fill="#fff" />`, "flat")],
                [1151, ic(14, 14, svg`<path d="M1 1l12 12M13 1L1 13" stroke-width="2" />`)],
            ])}
        </div>`;
    }

    render() {
        return html`<div class="window">
            ${this.renderTitle()} ${this.renderMenu()} ${this.renderRibbon()} ${this.renderFormula()}
            ${this.renderSheet()} ${this.renderTabs()} ${this.renderStatus()} ${this.renderTaskbar()}
            <div class="grammar">${icons.wand}${icons.g(15, "#11a683")}</div>
            ${this.renderColors()} ${icons.cursor} ${this.renderRecorder()}
            <div class="badge">${icons.g(28, "#0c8a66")}</div>
        </div>`;
    }
}
